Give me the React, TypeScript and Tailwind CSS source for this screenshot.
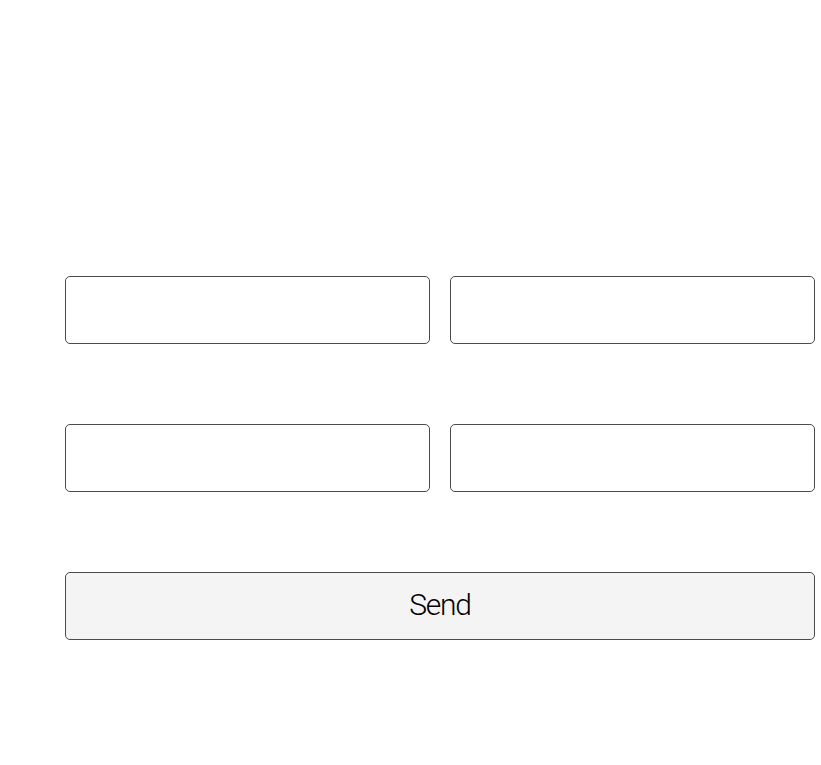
import React from "react";

export default function App() {
  const inputCls =
    "h-[68px] w-full rounded-[5px] border border-[#4a4a4a] bg-white px-3 text-[18px] outline-none";
  return (
    <div className="min-h-[765px] w-full bg-white" style={{ fontFamily: "Roboto, 'Liberation Sans', sans-serif" }}>
      <form className="ml-[65px] w-[750px] pt-[276px] flex flex-col gap-[80px]">
        <div className="grid grid-cols-2 gap-x-[20px]">
          <input className={inputCls} />
          <input className={inputCls} />
        </div>
        <div className="grid grid-cols-2 gap-x-[20px]">
          <input className={inputCls} />
          <input className={inputCls} />
        </div>
        <button
          type="button"
          className="h-[68px] w-full rounded-[5px] border border-[#4a4a4a] bg-[#f4f4f4] pb-[3px] text-[30px] font-light tracking-[-1.2px] text-black"
        >
          Send
        </button>
      </form>
    </div>
  );
}
